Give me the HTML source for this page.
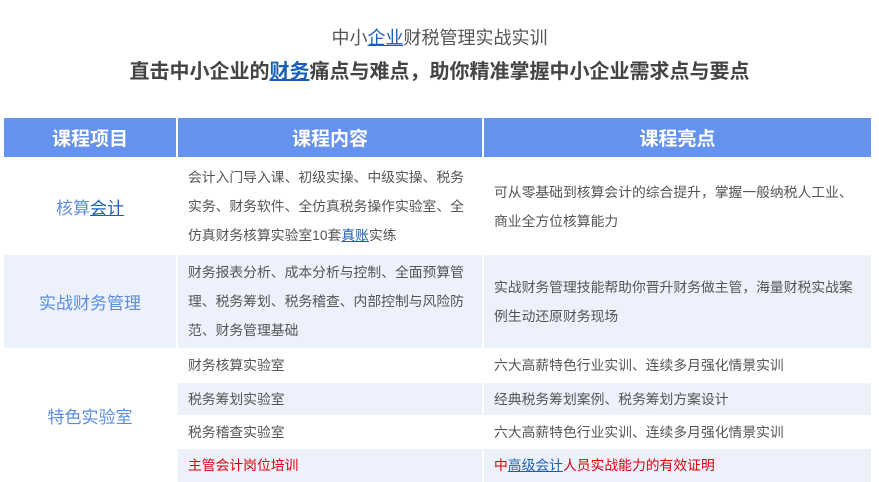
<!DOCTYPE html>
<html><head><meta charset="utf-8"><style>
*{margin:0;padding:0;box-sizing:border-box}
body{width:879px;height:482px;background:#fff;font-family:"Liberation Sans","Noto Sans CJK SC",sans-serif;position:relative;overflow:hidden}
.a{position:absolute}
.t1{top:26px;left:0;width:879px;text-align:center;font-size:18px;color:#555;line-height:24px}
.t2{top:58px;left:0;width:879px;text-align:center;font-size:20px;font-weight:bold;color:#444;line-height:28px}
u{color:#1a5fb4;text-decoration:underline}
.h{background:#6592ee;color:#fff;font-size:19px;font-weight:bold;display:flex;align-items:center;justify-content:center}
.l{background:#edf1fb}
.c1{color:#5b8de0;font-size:17px;display:flex;align-items:center;justify-content:center}
.tx{font-size:13.8px;color:#555;line-height:29px;padding-left:10px;display:flex;align-items:center}
.w2>div{width:282px}
.w3>div{width:362px}
.red{color:#e0000a}
</style></head><body>
<div class="a t1">中小<u>企业</u>财税管理实战实训</div>
<div class="a t2">直击中小企业的<u>财务</u>痛点与难点，助你精准掌握中小企业需求点与要点</div>

<div class="a h" style="left:4px;top:118px;width:172px;height:39px">课程项目</div>
<div class="a h" style="left:178px;top:118px;width:304px;height:39px">课程内容</div>
<div class="a h" style="left:484px;top:118px;width:387px;height:39px">课程亮点</div>

<div class="a c1" style="left:4px;top:159px;width:172px;height:95px"><div>核算<u>会计</u></div></div>
<div class="a tx w2" style="left:178px;top:159px;width:304px;height:95px"><div>会计入门导入课、初级实操、中级实操、税务实务、财务软件、全仿真税务操作实验室、全仿真财务核算实验室10套<u>真账</u>实练</div></div>
<div class="a tx w3" style="left:484px;top:159px;width:387px;height:95px"><div>可从零基础到核算会计的综合提升，掌握一般纳税人工业、商业全方位核算能力</div></div>

<div class="a c1 l" style="left:4px;top:255px;width:172px;height:93px">实战财务管理</div>
<div class="a tx l w2" style="left:178px;top:255px;width:304px;height:93px"><div>财务报表分析、成本分析与控制、全面预算管理、税务筹划、税务稽查、内部控制与风险防范、财务管理基础</div></div>
<div class="a tx l w3" style="left:484px;top:255px;width:387px;height:93px"><div>实战财务管理技能帮助你晋升财务做主管，海量财税实战案例生动还原财务现场</div></div>

<div class="a c1" style="left:4px;top:349px;width:172px;height:133px">特色实验室</div>
<div class="a tx" style="left:178px;top:349px;width:304px;height:33px">财务核算实验室</div>
<div class="a tx" style="left:484px;top:349px;width:387px;height:33px">六大高薪特色行业实训、连续多月强化情景实训</div>
<div class="a tx l" style="left:178px;top:383px;width:304px;height:32px">税务筹划实验室</div>
<div class="a tx l" style="left:484px;top:383px;width:387px;height:32px">经典税务筹划案例、税务筹划方案设计</div>
<div class="a tx" style="left:178px;top:416px;width:304px;height:32px">税务稽查实验室</div>
<div class="a tx" style="left:484px;top:416px;width:387px;height:32px">六大高薪特色行业实训、连续多月强化情景实训</div>
<div class="a tx l red" style="left:178px;top:449px;width:304px;height:33px">主管会计岗位培训</div>
<div class="a tx l red" style="left:484px;top:449px;width:387px;height:33px"><div>中<u>高级会计</u>人员实战能力的有效证明</div></div>
</body></html>
